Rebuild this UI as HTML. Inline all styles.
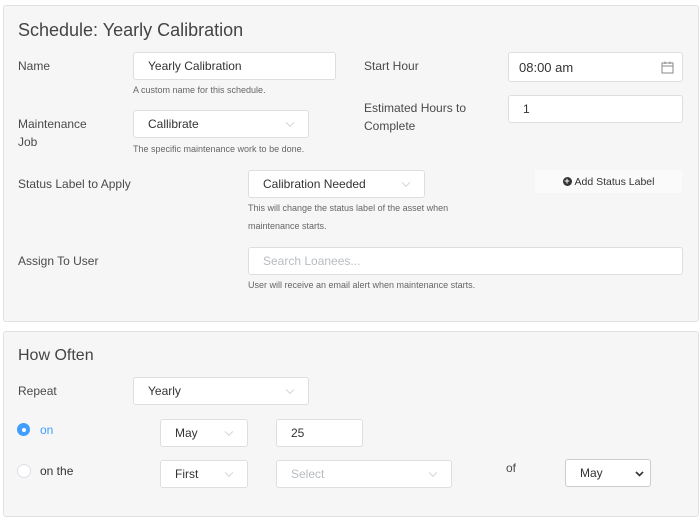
<!DOCTYPE html>
<html><head><style>
body{margin:0;width:700px;height:519px;background:#fff;font-family:"Liberation Sans",sans-serif;color:#444;position:relative;overflow:hidden}
.p{position:absolute;background:#f5f6f5;border:1px solid #e0e2e0;border-radius:3px}
.a{position:absolute;white-space:nowrap}
.l{font-size:12px;color:#4a4a4a;line-height:18px}
.h{font-size:9px;color:#666}
.i{position:absolute;background:#fff;border:1px solid #dcdfe2;border-radius:3px;box-sizing:border-box;font-size:12px;color:#333;padding-left:14px;display:flex;align-items:center}
.c::after{content:"";position:absolute;right:15px;top:50%;width:5px;height:5px;border-right:1px solid #d0d3d8;border-bottom:1px solid #d0d3d8;transform:translateY(-70%) rotate(45deg)}
</style></head><body>
<div class="p" style="left:3px;top:5px;width:694px;height:315px"></div>
<div class="p" style="left:3px;top:331px;width:694px;height:184px"></div>
<div class="a" style="left:18px;top:20px;font-size:18px;color:#444">Schedule: Yearly Calibration</div>
<div class="a l" style="left:18px;top:57px">Name</div>
<div class="i" style="left:133px;top:52px;width:203px;height:28px">Yearly Calibration</div>
<div class="a h" style="left:133px;top:85px">A custom name for this schedule.</div>
<div class="a l" style="left:364px;top:57px">Start Hour</div>
<div class="i" style="left:508px;top:52px;width:175px;height:30px;padding-left:10px;font-size:13px">08:00 am
<svg style="position:absolute;right:8px;top:8px" width="13" height="13" viewBox="0 0 13 13"><rect x="1" y="2" width="11" height="10" fill="none" stroke="#888"/><line x1="1" y1="5" x2="12" y2="5" stroke="#888"/><line x1="4" y1="0.5" x2="4" y2="3" stroke="#888"/><line x1="9" y1="0.5" x2="9" y2="3" stroke="#888"/></svg></div>
<div class="a l" style="left:18px;top:115px;line-height:18px">Maintenance<br>Job</div>
<div class="i c" style="left:133px;top:110px;width:176px;height:28px">Callibrate</div>
<div class="a h" style="left:133px;top:144px">The specific maintenance work to be done.</div>
<div class="a l" style="left:364px;top:99px">Estimated Hours to<br>Complete</div>
<div class="i" style="left:508px;top:95px;width:175px;height:28px">1</div>
<div class="a l" style="left:18px;top:175px">Status Label to Apply</div>
<div class="i c" style="left:248px;top:170px;width:177px;height:28px">Calibration Needed</div>
<div class="a h" style="left:248px;top:199px;line-height:18px">This will change the status label of the asset when<br>maintenance starts.</div>
<div class="a" style="left:535px;top:170px;width:147px;height:23px;background:#f9faf9;font-size:10.5px;color:#333;display:flex;align-items:center;justify-content:center"><span style="display:inline-block;width:9px;height:9px;border-radius:50%;background:#333;color:#fff;font-size:9px;line-height:9px;text-align:center;margin-right:3px;font-weight:bold">+</span>Add Status Label</div>
<div class="a l" style="left:18px;top:252px">Assign To User</div>
<div class="i" style="left:248px;top:247px;width:435px;height:28px;color:#b8bcc2">Search Loanees...</div>
<div class="a h" style="left:248px;top:280px">User will receive an email alert when maintenance starts.</div>
<div class="a" style="left:18px;top:347px;font-size:16px;color:#444">How Often</div>
<div class="a l" style="left:18px;top:382px">Repeat</div>
<div class="i c" style="left:133px;top:377px;width:176px;height:28px">Yearly</div>
<div class="a" style="left:17px;top:423px;width:13px;height:13px;border-radius:50%;background:#409eff"><div style="position:absolute;left:4.5px;top:4.5px;width:4px;height:4px;border-radius:50%;background:#fff"></div></div>
<div class="a l" style="left:40px;top:421px;color:#409eff">on</div>
<div class="i c" style="left:160px;top:419px;width:88px;height:28px">May</div>
<div class="i" style="left:276px;top:419px;width:87px;height:28px">25</div>
<div class="a" style="left:17px;top:464px;width:12px;height:12px;border-radius:50%;background:#fff;border:1px solid #dcdfe6"></div>
<div class="a l" style="left:40px;top:462px;color:#333">on the</div>
<div class="i c" style="left:160px;top:460px;width:88px;height:28px">First</div>
<div class="i c" style="left:276px;top:460px;width:176px;height:28px;color:#b8bcc2">Select</div>
<div class="a l" style="left:506px;top:459px">of</div>
<div class="i" style="left:565px;top:459px;width:86px;height:28px;border-color:#ccc">May<svg style="position:absolute;right:6px;top:11px" width="9" height="6" viewBox="0 0 9 6"><path d="M1 1l3.5 3.5L8 1" fill="none" stroke="#333" stroke-width="1.6"/></svg></div>
</body></html>
